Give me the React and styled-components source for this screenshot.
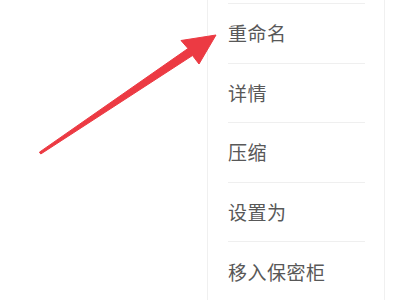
import React from 'react'
import styled, { createGlobalStyle } from 'styled-components'

const GlobalStyle = createGlobalStyle`
  html, body {
    margin: 0;
    padding: 0;
    background: #ffffff;
  }
  body {
    font-family: "Noto Sans CJK SC", "Noto Sans", sans-serif;
  }
`

const Page = styled.div`
  position: relative;
  width: 400px;
  height: 300px;
  overflow: hidden;
  background: #ffffff;
`

const Menu = styled.div`
  margin-left: 207px;
  width: 178px;
  height: 300px;
  border-left: 1px solid #f0f0f0;
  border-right: 1px solid #f0f0f0;
  box-sizing: border-box;
`

// bottom edge of the item scrolled off above
const Stub = styled.div`
  height: 3px;
  margin: 0 19px 0 20px;
  border-bottom: 1px solid #efefef;
`

const Item = styled.div`
  height: 59.6px;
  margin: 0 19px 0 20px;
  padding-bottom: 1px;
  box-sizing: border-box;
  display: flex;
  align-items: center;
  border-bottom: 1px solid #efefef;
  font-size: 19px;
  color: #585858;
  letter-spacing: 0.5px;
`

const Arrow = styled.svg`
  position: absolute;
  left: 0;
  top: 0;
  pointer-events: none;
`

const items = ['重命名', '详情', '压缩', '设置为', '移入保密柜']

export default function App() {
  return (
    <Page>
      <GlobalStyle />
      <Menu>
        <Stub />
        {items.map((label) => (
          <Item key={label}>{label}</Item>
        ))}
      </Menu>
      <Arrow width="400" height="300" viewBox="0 0 400 300">
        <polygon
          points="39.4,152.2 188,48.5 181,40.5 216,35 199,64 192.5,55.5 40.8,154"
          fill="#ec3a43"
          stroke="#ec3a43"
          strokeWidth="1"
          strokeLinejoin="round"
        />
      </Arrow>
    </Page>
  )
}
